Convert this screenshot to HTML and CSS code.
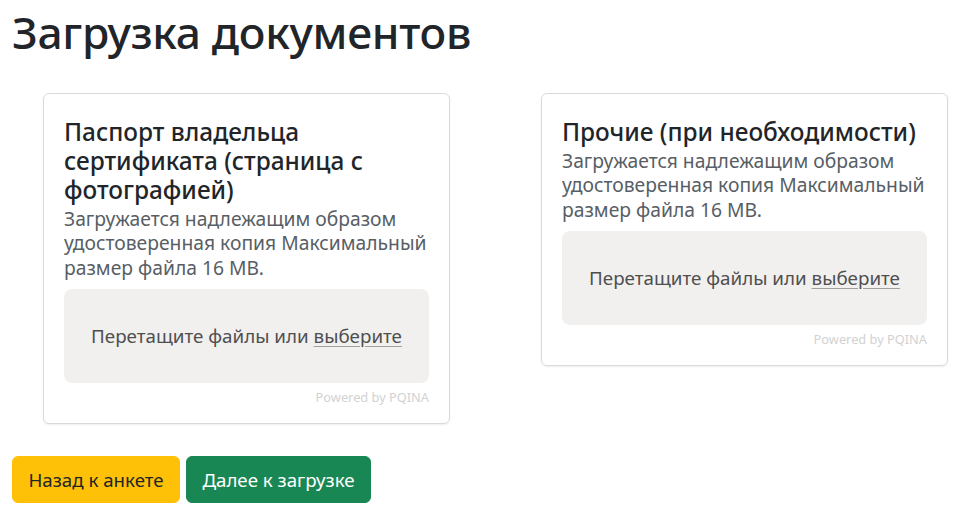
FILE: index.html
```html
<!DOCTYPE html>
<html lang="ru">
<head>
<meta charset="utf-8">
<title>Загрузка документов</title>
<link rel="stylesheet" href="styles.css">
</head>
<body>
<main class="page">
  <h1 class="page-title">Загрузка документов</h1>
  <div class="cards">
    <div class="col">
      <section class="card">
        <h2 class="card-title">Паспорт владельца сертификата (страница с фотографией)</h2>
        <p class="card-desc">Загружается надлежащим образом удостоверенная копия Максимальный размер файла 16 MB.</p>
        <div class="drop">Перетащите файлы или&nbsp;<span class="drop-link">выберите</span></div>
        <div class="credits">Powered by PQINA</div>
      </section>
    </div>
    <div class="col">
      <section class="card">
        <h2 class="card-title">Прочие (при необходимости)</h2>
        <p class="card-desc">Загружается надлежащим образом удостоверенная копия Максимальный размер файла 16 MB.</p>
        <div class="drop">Перетащите файлы или&nbsp;<span class="drop-link">выберите</span></div>
        <div class="credits">Powered by PQINA</div>
      </section>
    </div>
  </div>
  <div class="actions">
    <button class="btn btn-back">Назад к анкете</button>
    <button class="btn btn-next">Далее к загрузке</button>
  </div>
</main>
</body>
</html>
```

FILE: styles.css
```css
* { box-sizing: border-box; }
body {
  margin: 0;
  background: #fff;
  font-family: "Noto Sans", "Open Sans", sans-serif;
  color: #212529;
}
.page {
  padding: 0 12px;
}
.page-title {
  margin: 0;
  padding-top: 4px;
  font-size: 44.3px;
  font-weight: 500;
  line-height: 56px;
  letter-spacing: -0.3px;
}
.cards {
  display: grid;
  grid-template-columns: 498px 1fr;
  align-items: start;
  margin-top: 33px;
}
.col { padding-left: 31px; }
.card {
  width: 407px;
  border: 1px solid #dadada;
  border-radius: 6px;
  box-shadow: 0 1px 2px rgba(0,0,0,0.07);
  padding: 23px 20px 0 20px;
}
.card-title {
  margin: 0 0 3px;
  font-size: 24.4px;
  font-weight: 500;
  line-height: 29px;
}
.card-desc {
  margin: 0;
  font-size: 19.3px;
  line-height: 24.3px;
  color: #585e65;
}
.drop {
  margin-top: 9px;
  height: 94px;
  background: #f1f0ef;
  border-radius: 8px;
  display: flex;
  align-items: center;
  justify-content: center;
  font-size: 18.8px;
  color: #4f4f4f;
}
.drop-link {
  text-decoration: underline;
  text-decoration-color: #a0a0a0;
  text-underline-offset: 3px;
}
.credits {
  text-align: right;
  font-size: 12.8px;
  line-height: 14px;
  color: #d2d2d2;
  padding: 7px 0 19px;
}
.actions {
  display: flex;
  gap: 6px;
  margin-top: 32px;
}
.btn {
  font-family: inherit;
  font-size: 18.7px;
  height: 47px;
  padding: 0 10px;
  border-radius: 6px;
  border: 1px solid transparent;
}
.btn-back { background: #ffc107; border-color: #ffc107; color: #212529; width: 168px; }
.btn-next { background: #198754; border-color: #198754; color: #fff; width: 185px; }
```
